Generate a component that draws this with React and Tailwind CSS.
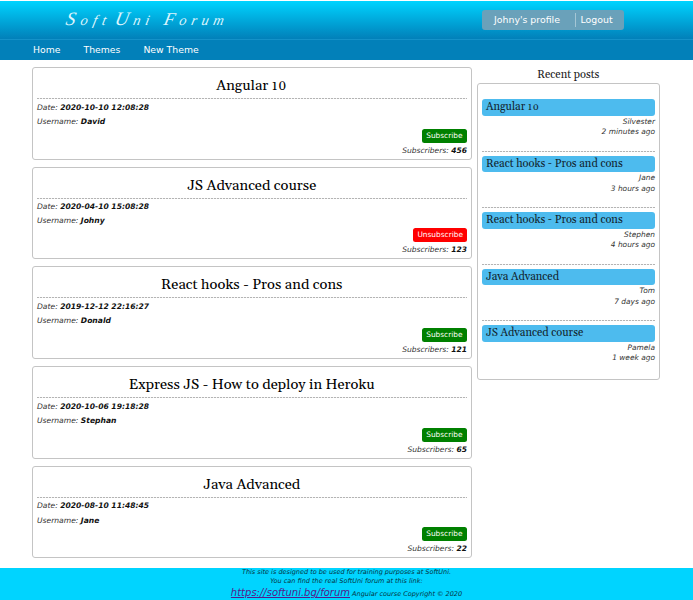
const themes = [
  { title: 'Angular 10', date: '2020-10-10 12:08:28', user: 'David', subs: 456 },
  { title: 'JS Advanced course', date: '2020-04-10 15:08:28', user: 'Johny', subs: 123, subscribed: true },
  { title: 'React hooks - Pros and cons', date: '2019-12-12 22:16:27', user: 'Donald', subs: 121 },
  { title: 'Express JS - How to deploy in Heroku', date: '2020-10-06 19:18:28', user: 'Stephan', subs: 65 },
  { title: 'Java Advanced', date: '2020-08-10 11:48:45', user: 'Jane', subs: 22 },
];

const posts = [
  { title: 'Angular 10', user: 'Silvester', ago: '2 minutes ago' },
  { title: 'React hooks - Pros and cons', user: 'Jane', ago: '3 hours ago' },
  { title: 'React hooks - Pros and cons', user: 'Stephen', ago: '4 hours ago' },
  { title: 'Java Advanced', user: 'Tom', ago: '7 days ago' },
  { title: 'JS Advanced course', user: 'Pamela', ago: '1 week ago' },
];

// Fine dashed rule: two pixels on, one pixel off.
function Rule() {
  return <div className="h-px bg-[repeating-linear-gradient(90deg,#b4b4b4_0_2px,#f4f4f4_2px_3px)]" />;
}

function Title({ text }) {
  return text.split(/(\d+)/).map((part, i) =>
    /^\d+$/.test(part) ? (
      <span key={i} className="text-[0.9em] tracking-[0.06em]">{part}</span>
    ) : (
      part
    )
  );
}

function Header() {
  return (
    <header className="mt-px">
      <div className="flex h-[38px] items-start justify-between bg-gradient-to-b from-[#00d4ff] to-[#0280b9] pl-[67px] pr-[69px]">
        <h1 className="flex -skew-x-12 pt-[8px] font-['Z003','URW_Chancery_L','Liberation_Serif',serif] text-[14.5px] italic leading-[20px] text-[#dcf5fd]">
          <span className="w-[49px] tracking-[5.2px]"><span className="text-[19px]">S</span>oft</span>
          <span className="w-[49px] tracking-[4.8px]"><span className="text-[19px]">U</span>ni</span>
          <span className="tracking-[4.6px]"><span className="text-[18px]">F</span>orum</span>
        </h1>
        <div className="mt-[9px] flex h-[20px] w-[142px] items-center rounded-[3px] bg-[#6aa1ba] pl-[12px] text-[9.4px] leading-none text-white">
          <a className="w-[81px]">Johny's profile</a>
          <a className="flex h-[14px] items-center border-l border-[#a5c6d5] pl-[4.5px]">Logout</a>
        </div>
      </div>
      <nav className="flex h-[20.5px] items-center gap-[23px] border-t border-[#1492c9] bg-[#0280b9] pl-[33px] text-[9.3px] leading-none text-white">
        <a>Home</a>
        <a>Themes</a>
        <a>New Theme</a>
      </nav>
    </header>
  );
}

function Theme({ theme }) {
  return (
    <article className="h-[92.6px] rounded-[3px] border-[1.5px] border-[#c4c4c4] px-[4px] text-[7.6px] leading-[14.3px] text-[#333]">
      <h2 className="h-[30px] pt-[7px] text-center font-['Georgia','Gelasio','Liberation_Serif',serif] text-[14.67px] leading-[21px] text-black">
        <Title text={theme.title} />
      </h2>
      <Rule />
      <p className="mt-[1.5px] italic">Date: <b className="text-[#111]">{theme.date}</b></p>
      <p className="italic">Username: <b className="text-[#111]">{theme.user}</b></p>
      <div className="-mr-[0.5px] flex flex-col items-end">
        {theme.subscribed ? (
          <button className="-mt-[0.5px] h-[14px] rounded-[2.5px] bg-[#ff0000] px-[4px] text-[7.4px] leading-[14px] text-white">Unsubscribe</button>
        ) : (
          <button className="-mt-[0.5px] h-[14px] rounded-[2.5px] bg-[#008000] px-[4.5px] text-[7.4px] leading-[14px] text-white">Subscribe</button>
        )}
        <p className="mt-[1px] text-[7.55px] italic">Subscribers: <b className="text-[#111]">{theme.subs}</b></p>
      </div>
    </article>
  );
}

function RecentPosts() {
  return (
    <aside className="w-[182.5px]">
      <h3 className="h-[16px] text-center font-['Georgia','Gelasio','Liberation_Serif',serif] text-[11.05px] leading-[17px] text-[#222]">Recent posts</h3>
      <ul className="h-[297px] rounded-[3px] border border-[#c4c4c4] px-[3.5px] pt-[15px]">
        {posts.map((post, i) => (
          <li key={i} className="h-[56.5px]">
            <h4 className="h-[16.5px] rounded-[3px] bg-[#4dbbee] pl-[4.5px] font-['Georgia','Gelasio','Liberation_Serif',serif] text-[11.05px] leading-[17px] text-[#12242d]">
              <Title text={post.title} />
            </h4>
            <div className="h-[35px] pt-[1px] text-right text-[7.45px] italic leading-[10.6px] text-[#333]">
              <p>{post.user}</p>
              <p>{post.ago}</p>
            </div>
            {i < posts.length - 1 && <Rule />}
          </li>
        ))}
      </ul>
    </aside>
  );
}

export default function App() {
  return (
    <div className="flow-root h-[600px] w-[693px] overflow-hidden bg-white font-['DejaVu_Sans',sans-serif]">
      <Header />
      <main className="flex h-[508px] gap-[5.5px] pl-[32px] pt-[7.5px]">
        <section className="flex w-[439.5px] flex-col gap-[7.1px]">
          {themes.map((theme) => <Theme key={theme.title} theme={theme} />)}
        </section>
        <RecentPosts />
      </main>
      <footer className="h-[33px] bg-[#00d4ff] pt-[0.5px] text-center text-[6.5px] italic leading-[9px] text-[#06313c]">
        <p>This site is designed to be used for training purposes at SoftUni.</p>
        <p>You can find the real SoftUni forum at this link:</p>
        <p className="leading-[14px]"><a className="text-[10px] text-[#551a8b] underline">https://softuni.bg/forum</a> Angular course Copyright © 2020</p>
      </footer>
    </div>
  );
}
